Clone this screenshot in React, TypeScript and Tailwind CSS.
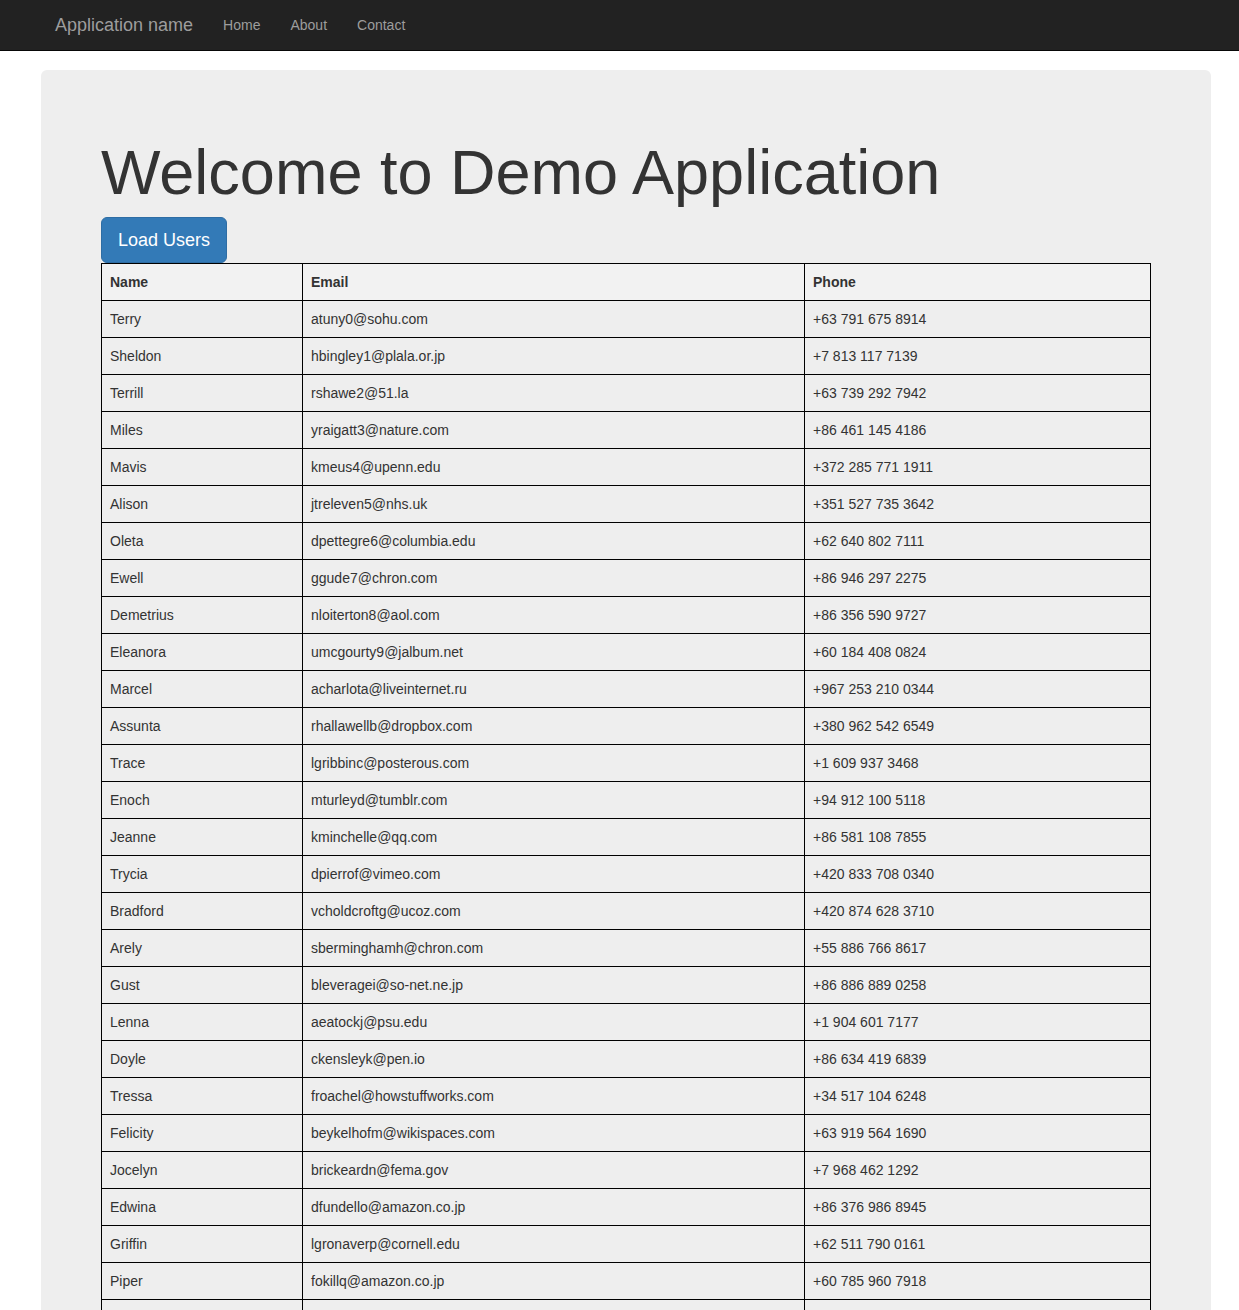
const users = [
  ['Terry', 'atuny0@sohu.com', '+63 791 675 8914'],
  ['Sheldon', 'hbingley1@plala.or.jp', '+7 813 117 7139'],
  ['Terrill', 'rshawe2@51.la', '+63 739 292 7942'],
  ['Miles', 'yraigatt3@nature.com', '+86 461 145 4186'],
  ['Mavis', 'kmeus4@upenn.edu', '+372 285 771 1911'],
  ['Alison', 'jtreleven5@nhs.uk', '+351 527 735 3642'],
  ['Oleta', 'dpettegre6@columbia.edu', '+62 640 802 7111'],
  ['Ewell', 'ggude7@chron.com', '+86 946 297 2275'],
  ['Demetrius', 'nloiterton8@aol.com', '+86 356 590 9727'],
  ['Eleanora', 'umcgourty9@jalbum.net', '+60 184 408 0824'],
  ['Marcel', 'acharlota@liveinternet.ru', '+967 253 210 0344'],
  ['Assunta', 'rhallawellb@dropbox.com', '+380 962 542 6549'],
  ['Trace', 'lgribbinc@posterous.com', '+1 609 937 3468'],
  ['Enoch', 'mturleyd@tumblr.com', '+94 912 100 5118'],
  ['Jeanne', 'kminchelle@qq.com', '+86 581 108 7855'],
  ['Trycia', 'dpierrof@vimeo.com', '+420 833 708 0340'],
  ['Bradford', 'vcholdcroftg@ucoz.com', '+420 874 628 3710'],
  ['Arely', 'sberminghamh@chron.com', '+55 886 766 8617'],
  ['Gust', 'bleveragei@so-net.ne.jp', '+86 886 889 0258'],
  ['Lenna', 'aeatockj@psu.edu', '+1 904 601 7177'],
  ['Doyle', 'ckensleyk@pen.io', '+86 634 419 6839'],
  ['Tressa', 'froachel@howstuffworks.com', '+34 517 104 6248'],
  ['Felicity', 'beykelhofm@wikispaces.com', '+63 919 564 1690'],
  ['Jocelyn', 'brickeardn@fema.gov', '+7 968 462 1292'],
  ['Edwina', 'dfundello@amazon.co.jp', '+86 376 986 8945'],
  ['Griffin', 'lgronaverp@cornell.edu', '+62 511 790 0161'],
  ['Piper', 'fokillq@amazon.co.jp', '+60 785 960 7918'],
  ['Kody', 'xisherwoodr@ask.com', '+81 859 545 8951'],
];

export default function App() {
  return (
    <div className="min-h-screen bg-white text-[#333] text-[14px] leading-[20px] font-['Liberation_Sans',Arial,sans-serif]">
      <nav className="h-[51px] bg-[#222] border-b border-[#080808]">
        <div className="flex items-center pl-[40px]">
          <a className="px-[15px] py-[15px] text-[18px] leading-[20px] text-[#9d9d9d]">Application name</a>
          <a className="px-[15px] py-[15px] text-[#9d9d9d]">Home</a>
          <a className="px-[15px] py-[15px] text-[#9d9d9d]">About</a>
          <a className="px-[15px] py-[15px] text-[#9d9d9d]">Contact</a>
        </div>
      </nav>

      <div className="ml-[41px] mt-[19px] w-[1170px] rounded-[6px] bg-[#eee] px-[60px] pt-[68px] pb-[48px]">
        <h1 className="mb-[10px] text-[63px] leading-[1.1] text-[#333]">Welcome to Demo Application</h1>
        <button className="rounded-[6px] border border-[#2e6da4] bg-[#337ab7] px-4 py-[10px] text-[18px] leading-[24px] text-white">
          Load Users
        </button>
        <table className="w-[1050px] border-collapse border border-black table-fixed">
          <thead>
            <tr className="bg-[#f2f2f2]">
              <th className="w-[201px] border border-black p-2 text-left font-bold">Name</th>
              <th className="w-[502px] border border-black p-2 text-left font-bold">Email</th>
              <th className="border border-black p-2 text-left font-bold">Phone</th>
            </tr>
          </thead>
          <tbody>
            {users.map(([name, email, phone]) => (
              <tr key={email}>
                <td className="border border-black p-2">{name}</td>
                <td className="border border-black p-2">{email}</td>
                <td className="border border-black p-2">{phone}</td>
              </tr>
            ))}
          </tbody>
        </table>
      </div>
    </div>
  );
}
